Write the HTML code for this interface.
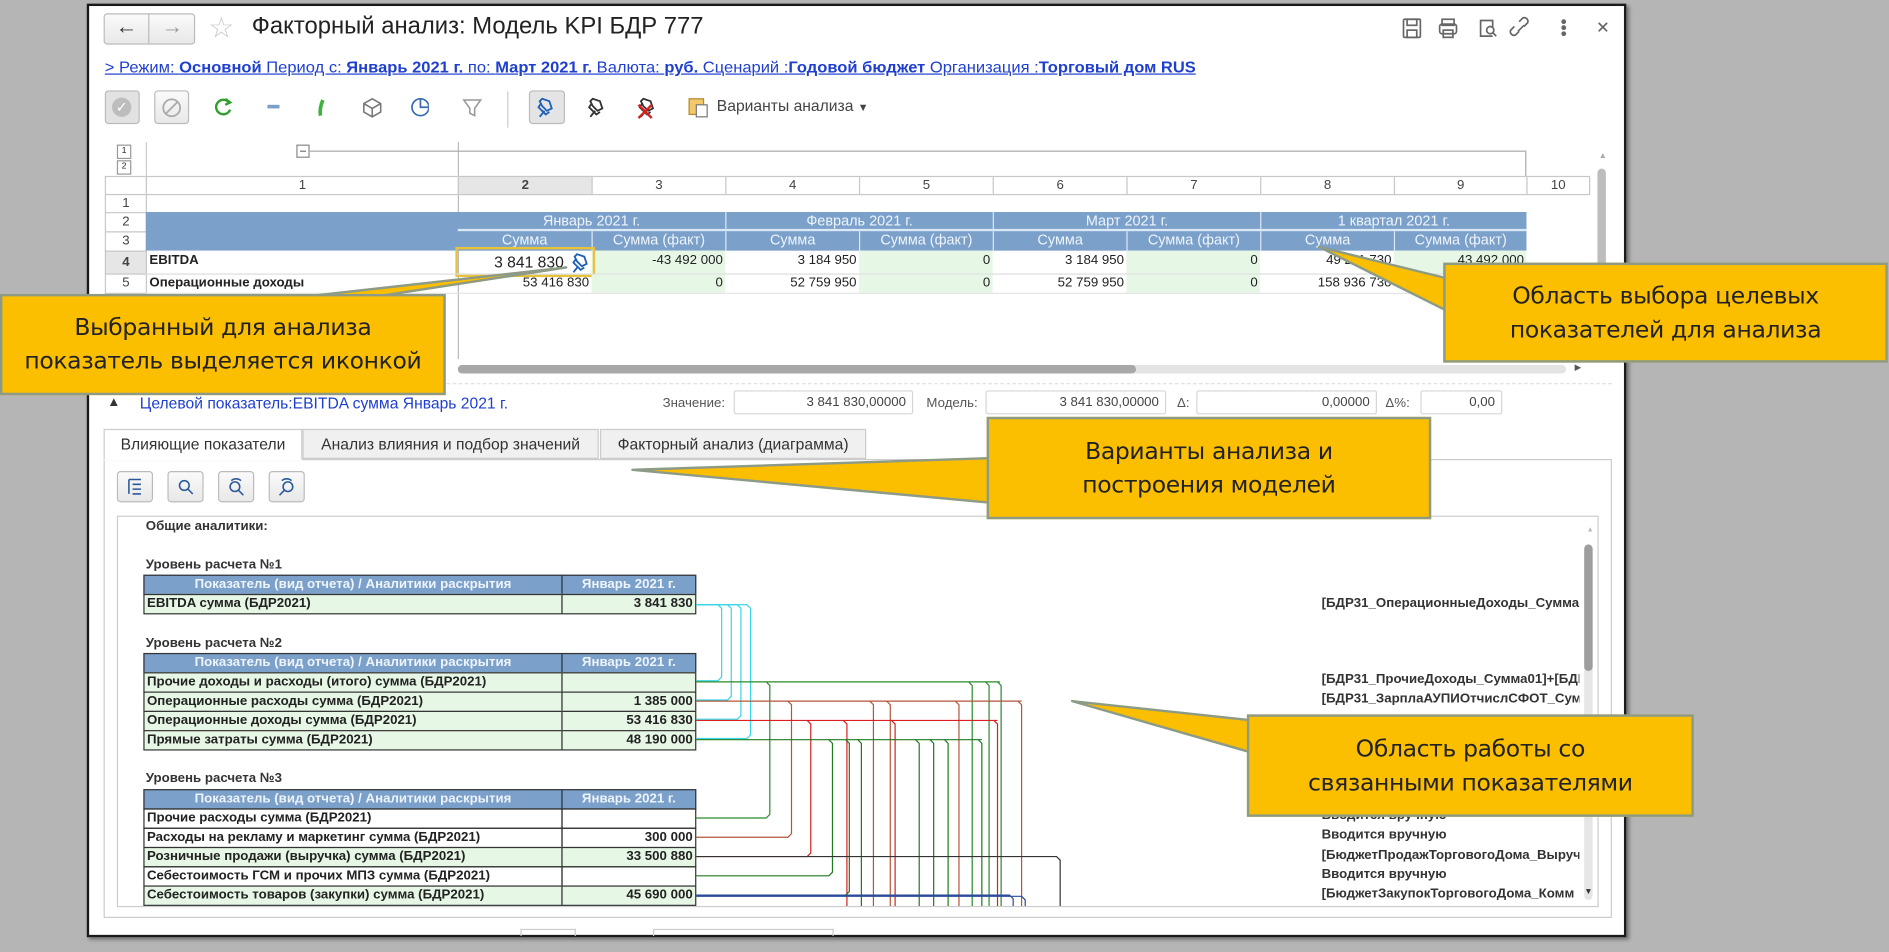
<!DOCTYPE html>
<html><head><meta charset="utf-8">
<style>
html,body{margin:0;padding:0;background:#b5b5b5;width:1889px;height:952px;overflow:hidden}
#s{position:absolute;left:0;top:0;width:1568px;height:790px;transform:scale(1.20472);transform-origin:0 0;font-family:"Liberation Sans Narrow","Liberation Sans",sans-serif;color:#222}
.a{position:absolute}
#win{position:absolute;left:72px;top:3px;width:1274px;height:771px;background:#fff;border:2px solid #1a1a1a;box-shadow:2px 2px 3px rgba(0,0,0,.4)}
.c{position:absolute;box-sizing:border-box;font-size:11px;line-height:15px;white-space:nowrap;overflow:hidden}
.h{background:#7ba0c9;color:#eef4fb;text-align:center;font-size:12px}
.g{background:#e7f7e6}
.r{text-align:right;padding-right:2px}
.hd{background:#fff;border:1px solid #c8c8c8;text-align:center;color:#444;font-size:11px}
.t{position:absolute;box-sizing:border-box;border:1px solid #333;font-size:11px;line-height:14px;padding:0 2px;white-space:nowrap;overflow:hidden}
.th{background:#7ba0c9;color:#eef4fb;text-align:center;font-weight:bold}
.lbl{position:absolute;font-size:11px;font-weight:bold;color:#333}
.box{position:absolute;border:1px solid #d6d6d6;border-radius:2px;height:20px;box-sizing:border-box;font-size:11px;line-height:18px;text-align:right;padding-right:5px;color:#444}
.btn{position:absolute;border:1px solid #bbb;border-radius:3px;background:linear-gradient(#fafafa,#e8e8e8);box-sizing:border-box}
.co{position:absolute;background:#fbbf00;border:2px solid #8c9a86;box-sizing:border-box;font-family:"DejaVu Sans","Liberation Sans",sans-serif;font-size:19.5px;line-height:28px;text-align:center;color:#222;display:flex;align-items:center;justify-content:center;letter-spacing:-0.3px}
.rt{position:absolute;left:1097px;font-size:11px;font-weight:bold;color:#333;white-space:nowrap;width:214px;overflow:hidden}
</style></head><body>
<div id="s">
<div id="win"></div>

<div class="btn" style="left:86px;top:11px;width:76px;height:26px"></div>
<div class="a" style="left:123px;top:12px;width:1px;height:24px;background:#bbb"></div>
<div class="a" style="left:96px;top:12px;font-size:18px;font-weight:bold;color:#333">&#8592;</div>
<div class="a" style="left:134px;top:12px;font-size:18px;font-weight:bold;color:#999">&#8594;</div>
<div class="a" style="left:173px;top:9px;font-size:24px;color:#c8c8c8">&#9734;</div>
<div class="a" style="left:209px;top:11px;font-size:19.8px;font-family:'Liberation Sans',sans-serif;color:#222">Факторный анализ: Модель KPI БДР 777</div>
<svg class="a" style="left:1160px;top:12px" width="185" height="24" viewBox="0 0 185 24" fill="none" stroke="#666" stroke-width="1.4">
<rect x="5" y="4" width="14" height="15" rx="1"/><rect x="8" y="4" width="8" height="5"/><rect x="8" y="13" width="8" height="6"/>
<rect x="37" y="4" width="10" height="5"/><rect x="35" y="8" width="14" height="8" rx="2"/><rect x="38" y="13" width="8" height="6"/>
<path d="M79 18H69V5h10v6"/><circle cx="77" cy="13" r="3"/><path d="M79 15l3 3"/>
<path d="M101 14l-3 3a3 3 0 0 1-4-4l3-3M105 10l3-3a3 3 0 0 0-4-4l-3 3M100 14l5-5"/>
<circle cx="138" cy="6" r="1.3" fill="#666"/><circle cx="138" cy="11" r="1.3" fill="#666"/><circle cx="138" cy="16" r="1.3" fill="#666"/>
<path d="M167 7l7 7M174 7l-7 7"/>
</svg>

<div class="a" style="left:87px;top:48px;font-size:13px;color:#1f3fcf;text-decoration:underline;white-space:nowrap;transform:scaleX(1.055);transform-origin:0 0">&gt; Режим: <b>Основной</b> Период с: <b>Январь 2021 г.</b> по: <b>Март 2021 г.</b> Валюта: <b>руб.</b> Сценарий :<b>Годовой бюджет</b> Организация :<b>Торговый дом RUS</b></div>

<div class="btn" style="left:87px;top:75px;width:29px;height:28px;background:#e2e2e2"></div>
<div class="a" style="left:93px;top:81px;width:16px;height:16px;border-radius:50%;background:#bdbdbd;color:#fff;font-size:12px;line-height:16px;text-align:center">&#10003;</div>
<div class="btn" style="left:128px;top:75px;width:29px;height:28px"></div>
<svg class="a" style="left:133px;top:80px" width="19" height="19"><circle cx="9.5" cy="9.5" r="7" fill="none" stroke="#aaa" stroke-width="1.5"/><path d="M5 14L14 5" stroke="#aaa" stroke-width="1.5"/></svg>
<svg class="a" style="left:176px;top:79px" width="180" height="20" fill="none" stroke-width="2">
<path d="M14 6a6 6 0 1 0 1 6" stroke="#2ea02e"/><path d="M11 3l4 3-4 2" stroke="#2ea02e"/>
<rect x="46" y="8" width="10" height="3" fill="#7a9fc9" stroke="none"/>
<path d="M92 4q-3 7-2 13" stroke="#3cb33c" stroke-width="3"/>
<path d="M133 3l7 4v7l-7 4-7-4V7z M126 7l7 4 7-4M133 11v7" stroke="#777" stroke-width="1.3"/>
<circle cx="173" cy="10" r="7" stroke="#3a6ab0" stroke-width="1.4"/><path d="M173 3v7h7" stroke="#3a6ab0" stroke-width="1.4"/>
</svg>
<svg class="a" style="left:383px;top:80px" width="18" height="18" fill="none" stroke="#999" stroke-width="1.3"><path d="M2 3h14l-5 7v6l-4-2v-4z"/></svg>
<div class="a" style="left:421px;top:76px;width:1px;height:30px;background:#ccc"></div>
<div class="btn" style="left:439px;top:75px;width:30px;height:28px;background:#e4e4e4"></div>
<svg class="a" style="left:440px;top:78px" width="120" height="22" fill="none" stroke-width="1.5">
<path d="M8 19l4-5M10 4l6 2 2 6-4 2-4-4-2-4z M9 8l-2 3 6 6 3-2" stroke="#1e5fb8"/>
<path d="M50 19l4-5M52 4l6 2 2 6-4 2-4-4-2-4z M51 8l-2 3 6 6 3-2" stroke="#333"/>
<path d="M92 19l4-5M94 4l6 2 2 6-4 2-4-4-2-4z M93 8l-2 3 6 6 3-2" stroke="#333"/><path d="M90 9l11 11M101 9l-11 11" stroke="#d52020" stroke-width="2"/>
</svg>
<svg class="a" style="left:570px;top:79px" width="20" height="20"><rect x="2" y="3" width="12" height="13" fill="#f3c76a" stroke="#b08a30"/><rect x="8" y="8" width="9" height="10" fill="#fff" stroke="#777"/></svg>
<div class="a" style="left:595px;top:80px;font-size:13px;color:#444">Варианты анализа <span style="font-size:9px">&#9660;</span></div>

<div class="a" style="left:97px;top:120px;width:10px;height:10px;border:1px solid #999;font-size:7px;line-height:10px;text-align:center">1</div>
<div class="a" style="left:97px;top:133px;width:10px;height:10px;border:1px solid #999;font-size:7px;line-height:10px;text-align:center">2</div>
<div class="a" style="left:121px;top:118px;width:1px;height:30px;background:#ccc"></div>
<div class="a" style="left:380px;top:118px;width:1px;height:180px;background:#bbb"></div>
<div class="a" style="left:246px;top:120px;width:9px;height:9px;border:1px solid #888;font-size:9px;line-height:8px;text-align:center">&#8211;</div>
<div class="a" style="left:256px;top:125px;width:1010px;height:1px;background:#aaa"></div>
<div class="a" style="left:1266px;top:125px;width:1px;height:22px;background:#aaa"></div>

<div class="c hd" style="left:87px;top:146px;width:35px;height:16px"></div>
<div class="c hd" style="left:121px;top:146px;width:260px;height:16px">1</div>
<div class="c hd" style="left:380px;top:146px;width:112px;height:16px;background:#e6e6e6;font-weight:bold">2</div>
<div class="c hd" style="left:491px;top:146px;width:112px;height:16px">3</div>
<div class="c hd" style="left:602px;top:146px;width:112px;height:16px">4</div>
<div class="c hd" style="left:713px;top:146px;width:112px;height:16px">5</div>
<div class="c hd" style="left:824px;top:146px;width:112px;height:16px">6</div>
<div class="c hd" style="left:935px;top:146px;width:112px;height:16px">7</div>
<div class="c hd" style="left:1046px;top:146px;width:112px;height:16px">8</div>
<div class="c hd" style="left:1157px;top:146px;width:111px;height:16px">9</div>
<div class="c hd" style="left:1267px;top:146px;width:53px;height:16px">10</div>

<div class="c hd" style="left:87px;top:161px;width:35px;height:16px">1</div>
<div class="c hd" style="left:87px;top:176px;width:35px;height:17px">2</div>
<div class="c hd" style="left:87px;top:192px;width:35px;height:17px">3</div>
<div class="c hd" style="left:87px;top:208px;width:35px;height:20px;background:#e6e6e6;font-weight:bold;line-height:18px">4</div>
<div class="c hd" style="left:87px;top:227px;width:35px;height:17px">5</div>

<div class="c h" style="left:121px;top:176px;width:1146px;height:32px"></div>
<div class="c h" style="left:380px;top:176px;width:222px;height:16px;border-bottom:2px solid #dbe9f7">Январь 2021 г.</div>
<div class="c h" style="left:602px;top:176px;width:222px;height:16px;border-left:1px solid #dbe9f7;border-bottom:2px solid #dbe9f7">Февраль 2021 г.</div>
<div class="c h" style="left:824px;top:176px;width:222px;height:16px;border-left:1px solid #dbe9f7;border-bottom:2px solid #dbe9f7">Март 2021 г.</div>
<div class="c h" style="left:1046px;top:176px;width:221px;height:16px;border-left:1px solid #dbe9f7;border-bottom:2px solid #dbe9f7">1 квартал 2021 г.</div>
<div class="c h" style="left:380px;top:192px;width:111px;height:16px">Сумма</div>
<div class="c h" style="left:491px;top:192px;width:111px;height:16px;border-left:1px solid #dbe9f7">Сумма (факт)</div>
<div class="c h" style="left:602px;top:192px;width:111px;height:16px;border-left:1px solid #dbe9f7">Сумма</div>
<div class="c h" style="left:713px;top:192px;width:111px;height:16px;border-left:1px solid #dbe9f7">Сумма (факт)</div>
<div class="c h" style="left:824px;top:192px;width:111px;height:16px;border-left:1px solid #dbe9f7">Сумма</div>
<div class="c h" style="left:935px;top:192px;width:111px;height:16px;border-left:1px solid #dbe9f7">Сумма (факт)</div>
<div class="c h" style="left:1046px;top:192px;width:111px;height:16px;border-left:1px solid #dbe9f7">Сумма</div>
<div class="c h" style="left:1157px;top:192px;width:110px;height:16px;border-left:1px solid #dbe9f7">Сумма (факт)</div>

<div class="c" style="left:124px;top:209px;font-weight:bold">EBITDA</div>
<div class="c g r" style="left:491px;top:208px;width:111px;height:19px;line-height:17px">-43 492 000</div>
<div class="c r" style="left:602px;top:208px;width:111px;height:19px;line-height:17px">3 184 950</div>
<div class="c g r" style="left:713px;top:208px;width:111px;height:19px;line-height:17px">0</div>
<div class="c r" style="left:824px;top:208px;width:111px;height:19px;line-height:17px">3 184 950</div>
<div class="c g r" style="left:935px;top:208px;width:111px;height:19px;line-height:17px">0</div>
<div class="c r" style="left:1046px;top:208px;width:111px;height:19px;line-height:17px">49 211 730</div>
<div class="c g r" style="left:1157px;top:208px;width:110px;height:19px;line-height:17px">43 492 000</div>
<div class="c" style="left:378px;top:205px;width:116px;height:25px;border:2px solid #e8c23a;font-size:13px;line-height:21px;text-align:right;padding-right:24px">3 841 830</div>
<svg class="a" style="left:472px;top:209px" width="18" height="18" fill="none" stroke="#1e5fb8" stroke-width="1.5"><path d="M4 17l4-5M7 2l6 2 2 6-4 2-4-4-2-4z M6 6l-2 3 6 6 3-2"/></svg>
<div class="a" style="left:121px;top:227px;width:1146px;height:1px;background:#ddd"></div>
<div class="c" style="left:124px;top:228px;font-weight:bold">Операционные доходы</div>
<div class="c r" style="left:380px;top:228px;width:111px;height:15px">53 416 830</div>
<div class="c g r" style="left:491px;top:228px;width:111px;height:15px">0</div>
<div class="c r" style="left:602px;top:228px;width:111px;height:15px">52 759 950</div>
<div class="c g r" style="left:713px;top:228px;width:111px;height:15px">0</div>
<div class="c r" style="left:824px;top:228px;width:111px;height:15px">52 759 950</div>
<div class="c g r" style="left:935px;top:228px;width:111px;height:15px">0</div>
<div class="c r" style="left:1046px;top:228px;width:111px;height:15px">158 936 730</div>
<div class="a" style="left:121px;top:243px;width:1146px;height:1px;background:#e4e4e4"></div>

<div class="a" style="left:1327px;top:126px;font-size:7px;color:#aaa">&#9650;</div>
<div class="a" style="left:1326px;top:140px;width:7px;height:160px;background:#bdbdbd;border-radius:4px"></div>
<div class="a" style="left:380px;top:303px;width:920px;height:7px;background:#e4e4e4;border-radius:4px"></div>
<div class="a" style="left:380px;top:303px;width:563px;height:7px;background:#a8a8a8;border-radius:4px"></div>
<div class="a" style="left:1307px;top:301px;font-size:7px;color:#555">&#9654;</div>
<div class="a" style="left:86px;top:318px;width:1252px;border-top:1px dashed #ddd"></div>

<div class="a" style="left:89px;top:328px;font-size:11px;color:#333">&#9650;</div>
<div class="a" style="left:116px;top:327px;font-size:13px;color:#1f3fcf;transform:scaleX(1.0);white-space:nowrap">Целевой показатель:EBITDA сумма Январь 2021 г.</div>
<div class="a" style="left:550px;top:329px;font-size:11px;color:#555">Значение:</div>
<div class="box" style="left:609px;top:324px;width:149px">3 841 830,00000</div>
<div class="a" style="left:769px;top:329px;font-size:11px;color:#555">Модель:</div>
<div class="box" style="left:818px;top:324px;width:150px">3 841 830,00000</div>
<div class="a" style="left:977px;top:329px;font-size:11px;color:#555">Δ:</div>
<div class="box" style="left:993px;top:324px;width:150px">0,00000</div>
<div class="a" style="left:1150px;top:329px;font-size:11px;color:#555">Δ%:</div>
<div class="box" style="left:1179px;top:324px;width:68px">0,00</div>

<div class="a" style="left:86px;top:381px;width:1252px;height:381px;border:1px solid #ccc;box-sizing:border-box"></div>
<div class="a" style="left:86px;top:356px;width:165px;height:26px;border:1px solid #ccc;border-bottom:1px solid #fff;background:#fff;box-sizing:border-box;font-size:13px;line-height:24px;text-align:center;color:#333">Влияющие показатели</div>
<div class="a" style="left:251px;top:356px;width:246px;height:25px;border:1px solid #ccc;background:#f0f0f0;box-sizing:border-box;font-size:13px;line-height:23px;text-align:center;color:#333">Анализ влияния и подбор значений</div>
<div class="a" style="left:498px;top:356px;width:221px;height:25px;border:1px solid #ccc;background:#f0f0f0;box-sizing:border-box;font-size:13px;line-height:23px;text-align:center;color:#333">Факторный анализ (диаграмма)</div>
<div class="btn" style="left:97px;top:391px;width:30px;height:26px"></div>
<div class="btn" style="left:139px;top:391px;width:30px;height:26px"></div>
<div class="btn" style="left:181px;top:391px;width:30px;height:26px"></div>
<div class="btn" style="left:223px;top:391px;width:30px;height:26px"></div>
<svg class="a" style="left:97px;top:391px" width="160" height="26" fill="none" stroke="#2a5a9a" stroke-width="1.3">
<path d="M10 7v12M10 7h10M13 11h7M13 15h7M13 19h7"/>
<circle cx="56" cy="12" r="4"/><path d="M59 15l4 4"/>
<circle cx="98" cy="13" r="4"/><path d="M101 16l4 4M95 8a6 6 0 0 1 8 0"/>
<circle cx="142" cy="13" r="4"/><path d="M139 16l-4 4M137 8a6 6 0 0 1 8 0"/>
</svg>

<div class="a" style="left:97px;top:428px;width:1230px;height:325px;border:1px solid #ccc;box-sizing:border-box"></div>
<div class="a" style="left:1317px;top:437px;font-size:6px;color:#bbb">&#9650;</div>
<div class="a" style="left:1315px;top:452px;width:7px;height:295px;background:#e6e6e6;border-radius:4px"></div>
<div class="a" style="left:1315px;top:452px;width:7px;height:105px;background:#9e9e9e;border-radius:4px"></div>
<div class="a" style="left:1315px;top:737px;font-size:7px;color:#333">&#9660;</div>

<div class="lbl" style="left:121px;top:431px">Общие аналитики:</div>
<div class="lbl" style="left:121px;top:463px">Уровень расчета №1</div>
<div class="t th" style="left:119px;top:477px;width:348px;height:17px">Показатель (вид отчета) / Аналитики раскрытия</div>
<div class="t th" style="left:466px;top:477px;width:112px;height:17px">Январь 2021 г.</div>
<div class="t g" style="left:119px;top:493px;width:348px;height:17px;font-weight:bold">EBITDA сумма (БДР2021)</div>
<div class="t g r" style="left:466px;top:493px;width:112px;height:17px;font-weight:bold">3 841 830</div>

<div class="lbl" style="left:121px;top:528px">Уровень расчета №2</div>
<div class="t th" style="left:119px;top:542px;width:348px;height:17px">Показатель (вид отчета) / Аналитики раскрытия</div>
<div class="t th" style="left:466px;top:542px;width:112px;height:17px">Январь 2021 г.</div>
<div class="t g" style="left:119px;top:558px;width:348px;height:17px;font-weight:bold">Прочие доходы и расходы (итого) сумма (БДР2021)</div>
<div class="t g r" style="left:466px;top:558px;width:112px;height:17px"></div>
<div class="t g" style="left:119px;top:574px;width:348px;height:17px;font-weight:bold">Операционные расходы сумма (БДР2021)</div>
<div class="t g r" style="left:466px;top:574px;width:112px;height:17px;font-weight:bold">1 385 000</div>
<div class="t g" style="left:119px;top:590px;width:348px;height:17px;font-weight:bold">Операционные доходы сумма (БДР2021)</div>
<div class="t g r" style="left:466px;top:590px;width:112px;height:17px;font-weight:bold">53 416 830</div>
<div class="t g" style="left:119px;top:606px;width:348px;height:17px;font-weight:bold">Прямые затраты сумма (БДР2021)</div>
<div class="t g r" style="left:466px;top:606px;width:112px;height:17px;font-weight:bold">48 190 000</div>

<div class="lbl" style="left:121px;top:640px">Уровень расчета №3</div>
<div class="t th" style="left:119px;top:655px;width:348px;height:17px">Показатель (вид отчета) / Аналитики раскрытия</div>
<div class="t th" style="left:466px;top:655px;width:112px;height:17px">Январь 2021 г.</div>
<div class="t" style="left:119px;top:671px;width:348px;height:17px;font-weight:bold">Прочие расходы сумма (БДР2021)</div>
<div class="t r" style="left:466px;top:671px;width:112px;height:17px"></div>
<div class="t" style="left:119px;top:687px;width:348px;height:17px;font-weight:bold">Расходы на рекламу и маркетинг сумма (БДР2021)</div>
<div class="t r" style="left:466px;top:687px;width:112px;height:17px;font-weight:bold">300 000</div>
<div class="t g" style="left:119px;top:703px;width:348px;height:17px;font-weight:bold">Розничные продажи (выручка) сумма (БДР2021)</div>
<div class="t g r" style="left:466px;top:703px;width:112px;height:17px;font-weight:bold">33 500 880</div>
<div class="t" style="left:119px;top:719px;width:348px;height:17px;font-weight:bold">Себестоимость ГСМ и прочих МПЗ сумма (БДР2021)</div>
<div class="t r" style="left:466px;top:719px;width:112px;height:17px"></div>
<div class="t g" style="left:119px;top:735px;width:348px;height:17px;font-weight:bold">Себестоимость товаров (закупки) сумма (БДР2021)</div>
<div class="t g r" style="left:466px;top:735px;width:112px;height:17px;font-weight:bold">45 690 000</div>

<svg class="a" style="left:0;top:0" width="1568" height="790" fill="none" stroke-width="1">
<g stroke="#39d6e8">
<path d="M578 502H596l3 3V562l-3 3H578"/>
<path d="M578 502H604l3 3V578l-3 3H578"/>
<path d="M578 502H612l3 3V594l-3 3H578"/>
<path d="M578 502H620l3 3V610l-3 3H578"/>
</g>
<g stroke="#2a8a2a">
<path d="M578 566H830"/><path d="M636 566l3 3V676l-3 3H578"/>
<path d="M804 566l3 3V752M818 566l3 3V752M828 566l3 3V752"/>
</g>
<g stroke="#b4553a">
<path d="M578 582H848"/><path d="M654 582l3 3V692l-3 3H578"/>
<path d="M722 582l3 3V752M736 582l3 3V752M793 582l3 3V752M845 582l3 3V752"/>
</g>
<g stroke="#d82020">
<path d="M578 598H828"/><path d="M670 598l3 3V708l-3 3H578"/>
<path d="M700 598l3 3V752M740 598l3 3V752M825 598l3 3V752"/>
</g>
<g stroke="#207a20">
<path d="M578 614H815"/><path d="M688 614l3 3V724l-3 3H578"/><path d="M702 614l3 3V740l-3 3H578"/>
<path d="M712 614l3 3V752M760 614l3 3V752M772 614l3 3V752M784 614l3 3V752M812 614l3 3V752"/>
</g>
<path d="M578 711H877l3 3V752" stroke="#333"/>
<path d="M578 743H838l3 3V752M578 744H848l3 3V752" stroke="#2a4a9a"/>
</svg>

<div class="rt" style="top:495px">[БДР31_ОперационныеДоходы_Сумма01]</div>
<div class="rt" style="top:558px">[БДР31_ПрочиеДоходы_Сумма01]+[БДР31</div>
<div class="rt" style="top:574px">[БДР31_ЗарплаАУПИОтчислСФОТ_Сумма</div>
<div class="rt" style="top:671px">Вводится вручную</div>
<div class="rt" style="top:687px">Вводится вручную</div>
<div class="rt" style="top:704px">[БюджетПродажТорговогоДома_Выручка</div>
<div class="rt" style="top:720px">Вводится вручную</div>
<div class="rt" style="top:736px;width:210px">[БюджетЗакупокТорговогоДома_Комм</div>

<div class="a" style="left:432px;top:771px;width:44px;height:5px;border:1px solid #ccc;border-bottom:none"></div>
<div class="a" style="left:542px;top:771px;width:148px;height:5px;border:1px solid #ccc;border-bottom:none"></div>

<svg class="a" style="left:0;top:0" width="1568" height="790">
<g fill="#fbbf00" stroke="#8c9a86" stroke-width="2" stroke-linejoin="round">
<path d="M255 246L470 222L300 248Z"/>
<path d="M1205 232L1095 205L1205 260Z"/>
<path d="M830 380L525 390L830 418Z"/>
<path d="M1040 598L890 582L1040 625Z"/>
</g>
</svg>
<div class="co" style="left:0;top:244px;width:370px;height:84px">Выбранный для анализа<br>показатель выделяется иконкой</div>
<div class="co" style="left:1198px;top:218px;width:369px;height:83px">Область выбора целевых<br>показателей для анализа</div>
<div class="co" style="left:819px;top:346px;width:369px;height:85px">Варианты анализа и<br>построения моделей</div>
<div class="co" style="left:1035px;top:593px;width:371px;height:85px">Область работы со<br>связанными показателями</div>
</div>
</body></html>
